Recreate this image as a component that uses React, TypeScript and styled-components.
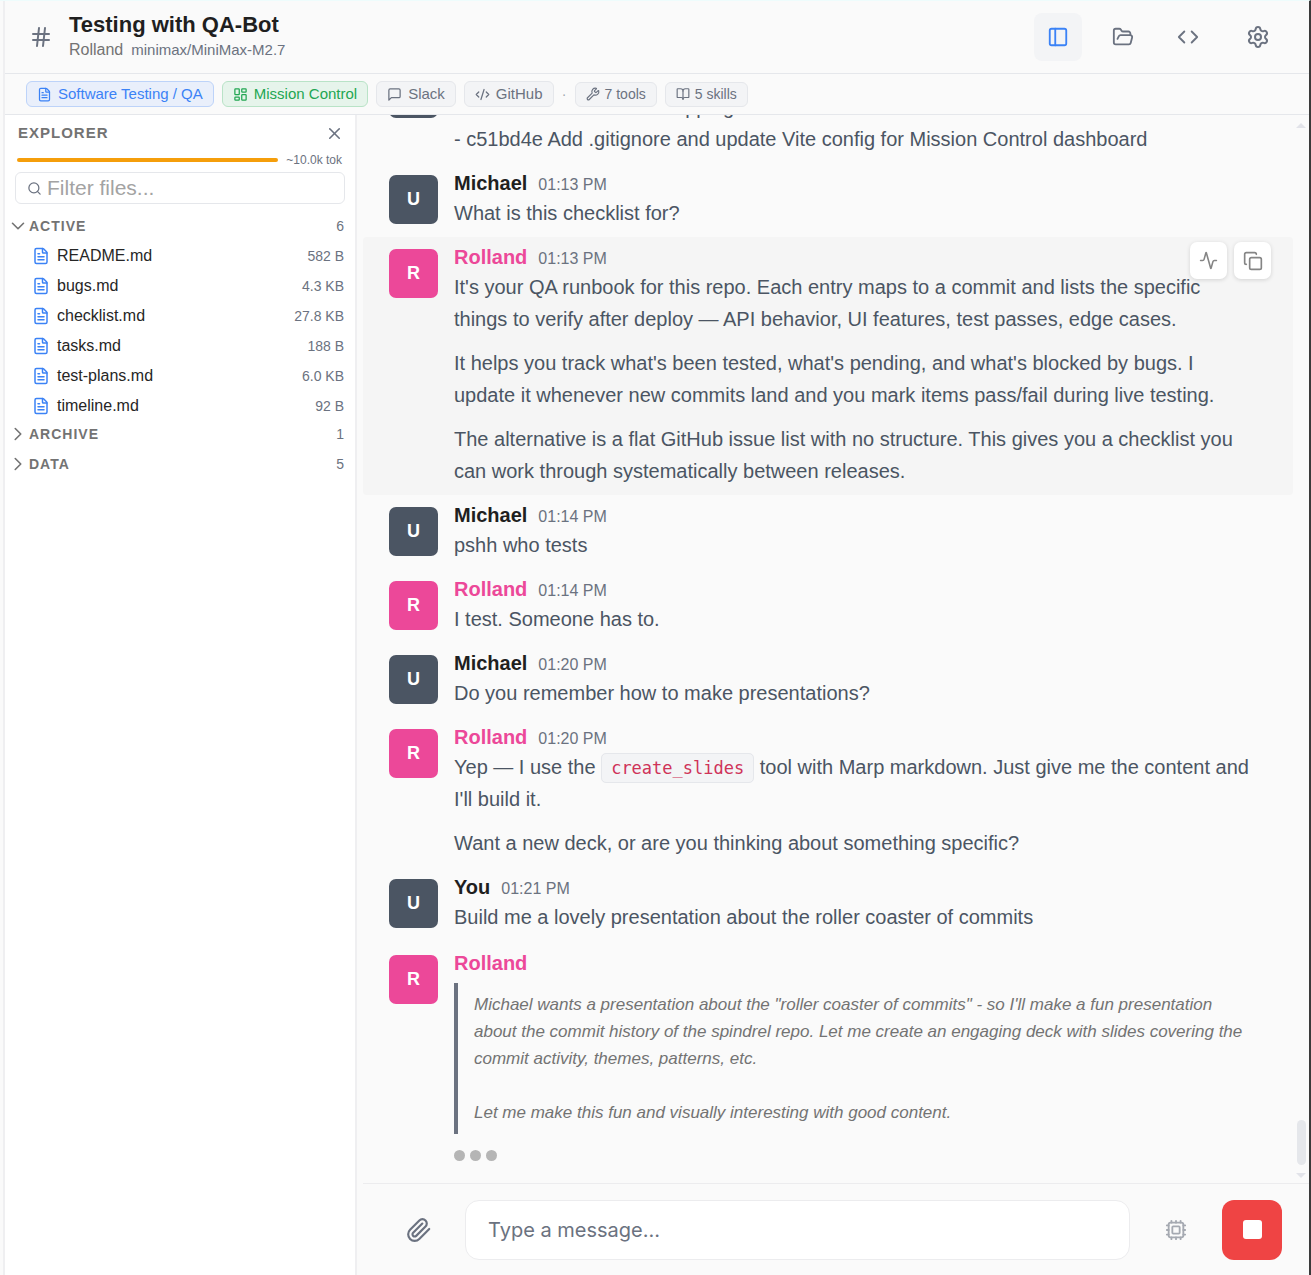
import React from 'react';
import styled, { createGlobalStyle, css } from 'styled-components';
import {
  Activity, BookOpen, ChevronDown, ChevronRight, Code, CodeXml, Copy, Cpu, FileText,
  FolderOpen, Hash, LayoutDashboard, PanelLeft, Search, Settings, Wrench, X,
} from 'lucide-react';

const c = {
  bg: '#fafafa',
  panel: '#ffffff',
  raised: '#f3f4f6',
  line: '#e5e7eb',
  softLine: '#ececee',
  text: '#1f1f1f',
  body: '#4b5563',
  muted: '#6b7280',
  grey: '#737373',
  blue: '#3b82f6',
  green: '#22a652',
  pink: '#ec4899',
  amber: '#f59e0b',
  red: '#ef4444',
};

const Global = createGlobalStyle`
  *, *::before, *::after { box-sizing: border-box; }
  body { margin: 0; background: ${c.bg}; font-family: "Liberation Sans", Arial, sans-serif; color: ${c.text}; }
  button { font: inherit; color: inherit; background: none; border: 0; padding: 0; cursor: pointer; }
  svg { display: block; flex: none; }
  h1, h2, p, ul, blockquote { margin: 0; padding: 0; }
  ul { list-style: none; }
`;

const Shell = styled.div`
  height: 100vh;
  display: flex;
  flex-direction: column;
  border-top: 1px solid #eefcfc;
  border-right: 2px solid #3a3a3a;
  padding-left: 3px;
  overflow: hidden;
`;

const Frame = styled.div`
  flex: 1;
  min-height: 0;
  display: flex;
  flex-direction: column;
  border-left: 2px solid #efeff1;
`;

const Header = styled.header`
  display: flex;
  align-items: center;
  height: 73px;
  padding: 0 39px 0 24px;
  border-bottom: 1px solid ${c.line};
  color: ${c.muted};
`;

const Titles = styled.div`
  flex: 1;
  min-width: 0;
  margin: 0 0 2px 16px;
`;

const Title = styled.h1`
  font-size: 22px;
  line-height: 28px;
  font-weight: 700;
  color: ${c.text};
`;

const Subtitle = styled.div`
  display: flex;
  align-items: baseline;
  gap: 8px;
  font-size: 16px;
  line-height: 22px;
  color: ${c.grey};
`;

const Model = styled.span`
  font-size: 15px;
  color: ${c.muted};
`;

const HeaderActions = styled.div`
  display: flex;
  gap: 17px;
`;

const HeaderButton = styled.button<{ $active?: boolean }>`
  display: flex;
  align-items: center;
  justify-content: center;
  width: 48px;
  height: 48px;
  border-radius: 8px;
  ${p => p.$active && css`background: ${c.raised}; color: ${c.blue};`}
`;

const SettingsButton = styled.button`
  margin-left: 34px;
`;

const Chips = styled.nav`
  display: flex;
  align-items: center;
  gap: 8px;
  height: 41px;
  padding: 0 21px;
  border-bottom: 1px solid ${c.line};
`;

const tones = {
  blue: css`color: ${c.blue}; background: #e9effb; border-color: #bdd3f9;`,
  green: css`color: ${c.green}; background: #e6f4eb; border-color: #b9e3c7;`,
  plain: css`color: ${c.muted}; background: ${c.raised}; border-color: ${c.line};`,
};

const Chip = styled.button<{ $tone: keyof typeof tones; $small?: boolean }>`
  display: flex;
  align-items: center;
  gap: ${p => (p.$small ? 5 : 6)}px;
  height: ${p => (p.$small ? 25 : 26)}px;
  padding: 0 10px;
  border: 1px solid;
  border-radius: 6px;
  font-size: ${p => (p.$small ? 14 : 15)}px;
  line-height: 20px;
  white-space: nowrap;
  ${p => tones[p.$tone]}
`;

const ChipDot = styled.span`
  width: 5px;
  text-align: center;
  font-size: 14px;
  color: #a3a7af;
`;

const Main = styled.div`
  flex: 1;
  min-height: 0;
  display: flex;
`;

const Sidebar = styled.aside`
  width: 352px;
  flex: none;
  background: ${c.panel};
  border-right: 2px solid #efeff1;
`;

const SideHead = styled.div`
  display: flex;
  align-items: center;
  justify-content: space-between;
  height: 38px;
  padding: 0 11px 2px 13px;
  color: ${c.muted};
`;

const Caps = styled.h2<{ $small?: boolean }>`
  font-size: ${p => (p.$small ? 14 : 15)}px;
  line-height: 20px;
  font-weight: 700;
  letter-spacing: 1px;
  color: ${c.grey};
`;

const Budget = styled.div`
  display: flex;
  align-items: center;
  gap: 8px;
  height: 14px;
  padding: 0 13px 0 12px;
  font-size: 12px;
  color: ${c.muted};
`;

const BudgetBar = styled.div`
  flex: 1;
  height: 4px;
  border-radius: 2px;
  background: ${c.amber};
`;

const Filter = styled.label`
  display: flex;
  align-items: center;
  gap: 5px;
  height: 32px;
  margin: 5px 10px 7px;
  padding: 0 11px;
  border: 1px solid ${c.line};
  border-radius: 6px;
  color: ${c.muted};
`;

const FilterInput = styled.input`
  flex: 1;
  min-width: 0;
  border: 0;
  outline: 0;
  padding: 0;
  background: transparent;
  font: 21px "Liberation Sans", Arial, sans-serif;
  color: ${c.text};
  &::placeholder { color: #a3a3a3; opacity: 1; }
`;

const Group = styled.button`
  display: flex;
  align-items: center;
  width: 100%;
  height: 30px;
  padding: 0 11px 0 2px;
  color: ${c.grey};
`;

const Count = styled.span`
  margin-left: auto;
  font-size: 14px;
  color: ${c.muted};
`;

const FileRow = styled.button`
  display: flex;
  align-items: center;
  gap: 7px;
  width: 100%;
  height: 30px;
  padding: 0 11px 0 27px;
  font-size: 16px;
  color: #262626;
  svg { color: ${c.blue}; }
`;

const FileList = styled.ul`
  height: 178px;
  display: flex;
  flex-direction: column;
  justify-content: space-between;
`;

const Chat = styled.main`
  flex: 1;
  min-width: 0;
  display: flex;
  flex-direction: column;
  margin-left: 6px;
`;

const Scroller = styled.div`
  flex: 1;
  min-height: 0;
  display: flex;
`;

const Messages = styled.div`
  flex: 1;
  min-width: 0;
  display: flex;
  flex-direction: column;
  justify-content: flex-end;
  overflow: hidden;
  padding-bottom: 14px;
`;

const Track = styled.div`
  display: flex;
  flex-direction: column;
  align-items: center;
  width: 16px;
  padding: 8px 0 5px;
`;

const Arrow = styled.span<{ $down?: boolean }>`
  border: 5px solid transparent;
  ${p => (p.$down ? 'border-top-color' : 'border-bottom-color')}: #e2e3e9;
  ${p => (p.$down ? 'border-bottom' : 'border-top')}: 0;
`;

const Thumb = styled.span`
  width: 9px;
  height: 45px;
  margin: auto 0 8px;
  border-radius: 5px;
  background: #e5e7eb;
`;

const Row = styled.article<{ $hover?: boolean; $live?: boolean }>`
  position: relative;
  flex: none;
  display: flex;
  gap: 16px;
  padding: 8px 38px 8px 26px;
  border-radius: 4px;
  ${p => p.$hover && css`background: #f5f5f5;`}
  ${p => p.$live && css`margin-top: 2px;`}
`;

const Avatar = styled.div<{ $bot?: boolean }>`
  flex: none;
  display: flex;
  align-items: center;
  justify-content: center;
  width: 49px;
  height: 49px;
  margin-top: 4px;
  border-radius: 7px;
  font-size: 18px;
  font-weight: 700;
  color: #fff;
  background: ${p => (p.$bot ? c.pink : '#4b5563')};
`;

const Content = styled.div`
  flex: 1;
  min-width: 0;
`;

const Byline = styled.div`
  display: flex;
  align-items: baseline;
  gap: 11px;
  height: 24px;
  line-height: 24px;
  margin-bottom: 2px;
`;

const Author = styled.span<{ $bot?: boolean }>`
  font-size: 20px;
  font-weight: 700;
  color: ${p => (p.$bot ? c.pink : c.text)};
`;

const Time = styled.time`
  font-size: 16px;
  color: ${c.muted};
`;

const Text = styled.div`
  display: flex;
  flex-direction: column;
  gap: 12px;
  font-size: 20px;
  line-height: 32px;
  color: ${c.body};
`;

const InlineCode = styled.code`
  padding: 4px 9px;
  border: 1px solid ${c.line};
  border-radius: 5px;
  background: ${c.raised};
  font: 17px "DejaVu Sans Mono", monospace;
  color: #cf3359;
`;

const Thinking = styled.blockquote`
  margin-top: 8px;
  padding: 8px 0 8px 16px;
  border-left: 4px solid ${c.muted};
  font-size: 17px;
  line-height: 27px;
  font-style: italic;
  white-space: pre-line;
  color: ${c.grey};
`;

const Dots = styled.div`
  display: flex;
  gap: 5px;
  margin-top: 16px;
  span { width: 11px; height: 11px; border-radius: 50%; background: #b5b5b5; }
`;

const RowActions = styled.div`
  position: absolute;
  top: 5px;
  right: 22px;
  display: flex;
  gap: 7px;
`;

const RowAction = styled.button`
  display: flex;
  align-items: center;
  justify-content: center;
  width: 37px;
  height: 37px;
  border-radius: 7px;
  background: #fff;
  color: #858585;
  box-shadow: 0 1px 4px rgba(0, 0, 0, 0.14);
`;

const Composer = styled.form`
  display: flex;
  align-items: center;
  height: 92px;
  padding: 0 27px 0 40px;
  border-top: 1px solid ${c.softLine};
  color: ${c.muted};
`;

const Tool = styled.button<{ $dim?: boolean }>`
  display: flex;
  align-items: center;
  justify-content: center;
  width: 32px;
  height: 60px;
  ${p => p.$dim && css`color: #a5a9b1;`}
`;

const MessageInput = styled.input`
  flex: 1;
  min-width: 0;
  height: 60px;
  margin: 0 30px;
  padding: 0 22px;
  border: 1px solid ${c.softLine};
  border-radius: 14px;
  outline: 0;
  background: #fff;
  font: 20px Inter, sans-serif;
  color: ${c.text};
  &::placeholder { color: ${c.muted}; opacity: 1; }
`;

const Stop = styled.button`
  display: flex;
  align-items: center;
  justify-content: center;
  width: 60px;
  height: 60px;
  margin-left: 30px;
  border-radius: 12px;
  background: ${c.red};
  span { width: 19px; height: 19px; border-radius: 3px; background: #fff; }
`;

const Stroke = ({ size, d }: { size: number; d: string }) => (
  <svg width={size} height={size} viewBox="0 0 24 24" fill="none" stroke="currentColor" strokeWidth="2" strokeLinecap="round" strokeLinejoin="round">
    <path d={d} />
  </svg>
);

const BUBBLE = 'M21 15a2 2 0 0 1-2 2H7l-4 4V5a2 2 0 0 1 2-2h14a2 2 0 0 1 2 2z';
const CLIP = 'm21.44 11.05-9.19 9.19a6 6 0 0 1-8.49-8.49l8.57-8.57A4 4 0 1 1 18 8.84l-8.59 8.57a2 2 0 0 1-2.83-2.83l8.49-8.48';

const files = [
  ['README.md', '582 B'],
  ['bugs.md', '4.3 KB'],
  ['checklist.md', '27.8 KB'],
  ['tasks.md', '188 B'],
  ['test-plans.md', '6.0 KB'],
  ['timeline.md', '92 B'],
];

type Msg = { author: string; time: string; bot?: boolean; hover?: boolean; paras: React.ReactNode[] };

const messages: Msg[] = [
  {
    author: 'Michael', time: '01:12 PM',
    paras: [<>- 3e8a41b Fix channel mapping<br />- c51bd4e Add .gitignore and update Vite config for Mission Control dashboard</>],
  },
  { author: 'Michael', time: '01:13 PM', paras: ['What is this checklist for?'] },
  {
    author: 'Rolland', time: '01:13 PM', bot: true, hover: true,
    paras: [
      "It's your QA runbook for this repo. Each entry maps to a commit and lists the specific things to verify after deploy — API behavior, UI features, test passes, edge cases.",
      "It helps you track what's been tested, what's pending, and what's blocked by bugs. I update it whenever new commits land and you mark items pass/fail during live testing.",
      'The alternative is a flat GitHub issue list with no structure. This gives you a checklist you can work through systematically between releases.',
    ],
  },
  { author: 'Michael', time: '01:14 PM', paras: ['pshh who tests'] },
  { author: 'Rolland', time: '01:14 PM', bot: true, paras: ['I test. Someone has to.'] },
  { author: 'Michael', time: '01:20 PM', paras: ['Do you remember how to make presentations?'] },
  {
    author: 'Rolland', time: '01:20 PM', bot: true,
    paras: [
      <>Yep — I use the <InlineCode>create_slides</InlineCode> tool with Marp markdown. Just give me the content and I'll build it.</>,
      'Want a new deck, or are you thinking about something specific?',
    ],
  },
  { author: 'You', time: '01:21 PM', paras: ['Build me a lovely presentation about the roller coaster of commits'] },
];

function Message({ author, time, bot, hover, paras }: Msg) {
  return (
    <Row $hover={hover}>
      <Avatar $bot={bot}>{bot ? 'R' : 'U'}</Avatar>
      <Content>
        <Byline><Author $bot={bot}>{author}</Author><Time>{time}</Time></Byline>
        <Text>{paras.map((p, i) => <p key={i}>{p}</p>)}</Text>
      </Content>
      {hover && (
        <RowActions>
          <RowAction aria-label="Trace"><Activity size={19} /></RowAction>
          <RowAction aria-label="Copy"><Copy size={20} /></RowAction>
        </RowActions>
      )}
    </Row>
  );
}

export default function App() {
  return (
    <Shell>
      <Global />
      <Frame>
        <Header>
          <Hash size={24} />
          <Titles>
            <Title>Testing with QA-Bot</Title>
            <Subtitle>Rolland <Model>minimax/MiniMax-M2.7</Model></Subtitle>
          </Titles>
          <HeaderActions>
            <HeaderButton $active aria-label="Explorer"><PanelLeft size={22} /></HeaderButton>
            <HeaderButton aria-label="Files"><FolderOpen size={22} /></HeaderButton>
            <HeaderButton aria-label="Code"><Code size={22} /></HeaderButton>
          </HeaderActions>
          <SettingsButton aria-label="Settings"><Settings size={24} /></SettingsButton>
        </Header>
        <Chips>
          <Chip $tone="blue"><FileText size={15} />Software Testing / QA</Chip>
          <Chip $tone="green"><LayoutDashboard size={15} />Mission Control</Chip>
          <Chip $tone="plain"><Stroke size={15} d={BUBBLE} />Slack</Chip>
          <Chip $tone="plain"><CodeXml size={15} />GitHub</Chip>
          <ChipDot>·</ChipDot>
          <Chip $tone="plain" $small><Wrench size={14} />7 tools</Chip>
          <Chip $tone="plain" $small><BookOpen size={14} />5 skills</Chip>
        </Chips>
        <Main>
          <Sidebar>
            <SideHead>
              <Caps>EXPLORER</Caps>
              <button aria-label="Close explorer"><X size={19} /></button>
            </SideHead>
            <Budget><BudgetBar />~10.0k tok</Budget>
            <Filter>
              <Search size={15} />
              <FilterInput aria-label="Filter files" placeholder="Filter files..." />
            </Filter>
            <Group><ChevronDown size={22} strokeWidth={1.75} /><Caps as="span" $small>ACTIVE</Caps><Count>6</Count></Group>
            <FileList>
              {files.map(([name, size]) => (
                <li key={name}><FileRow><FileText size={18} />{name}<Count>{size}</Count></FileRow></li>
              ))}
            </FileList>
            <Group><ChevronRight size={22} strokeWidth={1.75} /><Caps as="span" $small>ARCHIVE</Caps><Count>1</Count></Group>
            <Group><ChevronRight size={22} strokeWidth={1.75} /><Caps as="span" $small>DATA</Caps><Count>5</Count></Group>
          </Sidebar>
          <Chat>
            <Scroller>
              <Messages>
                {messages.map((m, i) => <Message key={i} {...m} />)}
                <Row $live>
                  <Avatar $bot>R</Avatar>
                  <Content>
                    <Byline><Author $bot>Rolland</Author></Byline>
                    <Thinking>
                      {`Michael wants a presentation about the "roller coaster of commits" - so I'll make a fun presentation about the commit history of the spindrel repo. Let me create an engaging deck with slides covering the commit activity, themes, patterns, etc.\n\nLet me make this fun and visually interesting with good content.`}
                    </Thinking>
                    <Dots><span /><span /><span /></Dots>
                  </Content>
                </Row>
              </Messages>
              <Track><Arrow /><Thumb /><Arrow $down /></Track>
            </Scroller>
            <Composer onSubmit={e => e.preventDefault()}>
              <Tool type="button" aria-label="Attach file"><Stroke size={26} d={CLIP} /></Tool>
              <MessageInput aria-label="Message" placeholder="Type a message..." />
              <Tool type="button" $dim aria-label="Model"><Cpu size={22} /></Tool>
              <Stop type="button" aria-label="Stop"><span /></Stop>
            </Composer>
          </Chat>
        </Main>
      </Frame>
    </Shell>
  );
}
